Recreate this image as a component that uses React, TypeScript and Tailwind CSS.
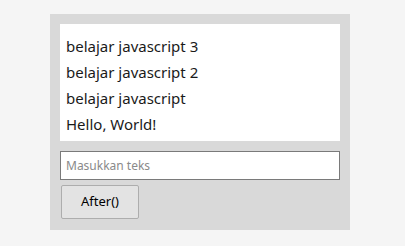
import React, { useState } from 'react';

export default function App() {
  const [items] = useState<string[]>([
    'belajar javascript 3',
    'belajar javascript 2',
    'belajar javascript',
    'Hello, World!',
  ]);
  const [text, setText] = useState('');

  return (
    <div className="min-h-[246px] w-full bg-[#f5f5f5] pt-[14px] font-['Segoe_UI','Noto_Sans',sans-serif]">
      <div className="ml-[50px] w-[300px] bg-[#d9d9d9] p-[10px] pb-[11px]">
        <ul className="flex h-[117px] flex-col bg-white px-[6px] pt-[9px] text-[15px] leading-[26px] text-[#1a1a1a]">
          {items.map((item, i) => (
            <li key={i}>{item}</li>
          ))}
        </ul>
        <input
          value={text}
          onChange={(e) => setText(e.target.value)}
          placeholder="Masukkan teks"
          className="mt-[10px] block h-[29px] w-full border border-[#7a7a7a] bg-white px-[5px] text-[12px] text-black outline-none placeholder:text-[#8a8a8a]"
        />
        <button className="ml-px mt-[5px] block h-[34px] w-[78px] rounded-[2px] border border-[#adadad] bg-[#e3e3e3] text-[13px] text-black">
          After()
        </button>
      </div>
    </div>
  );
}
